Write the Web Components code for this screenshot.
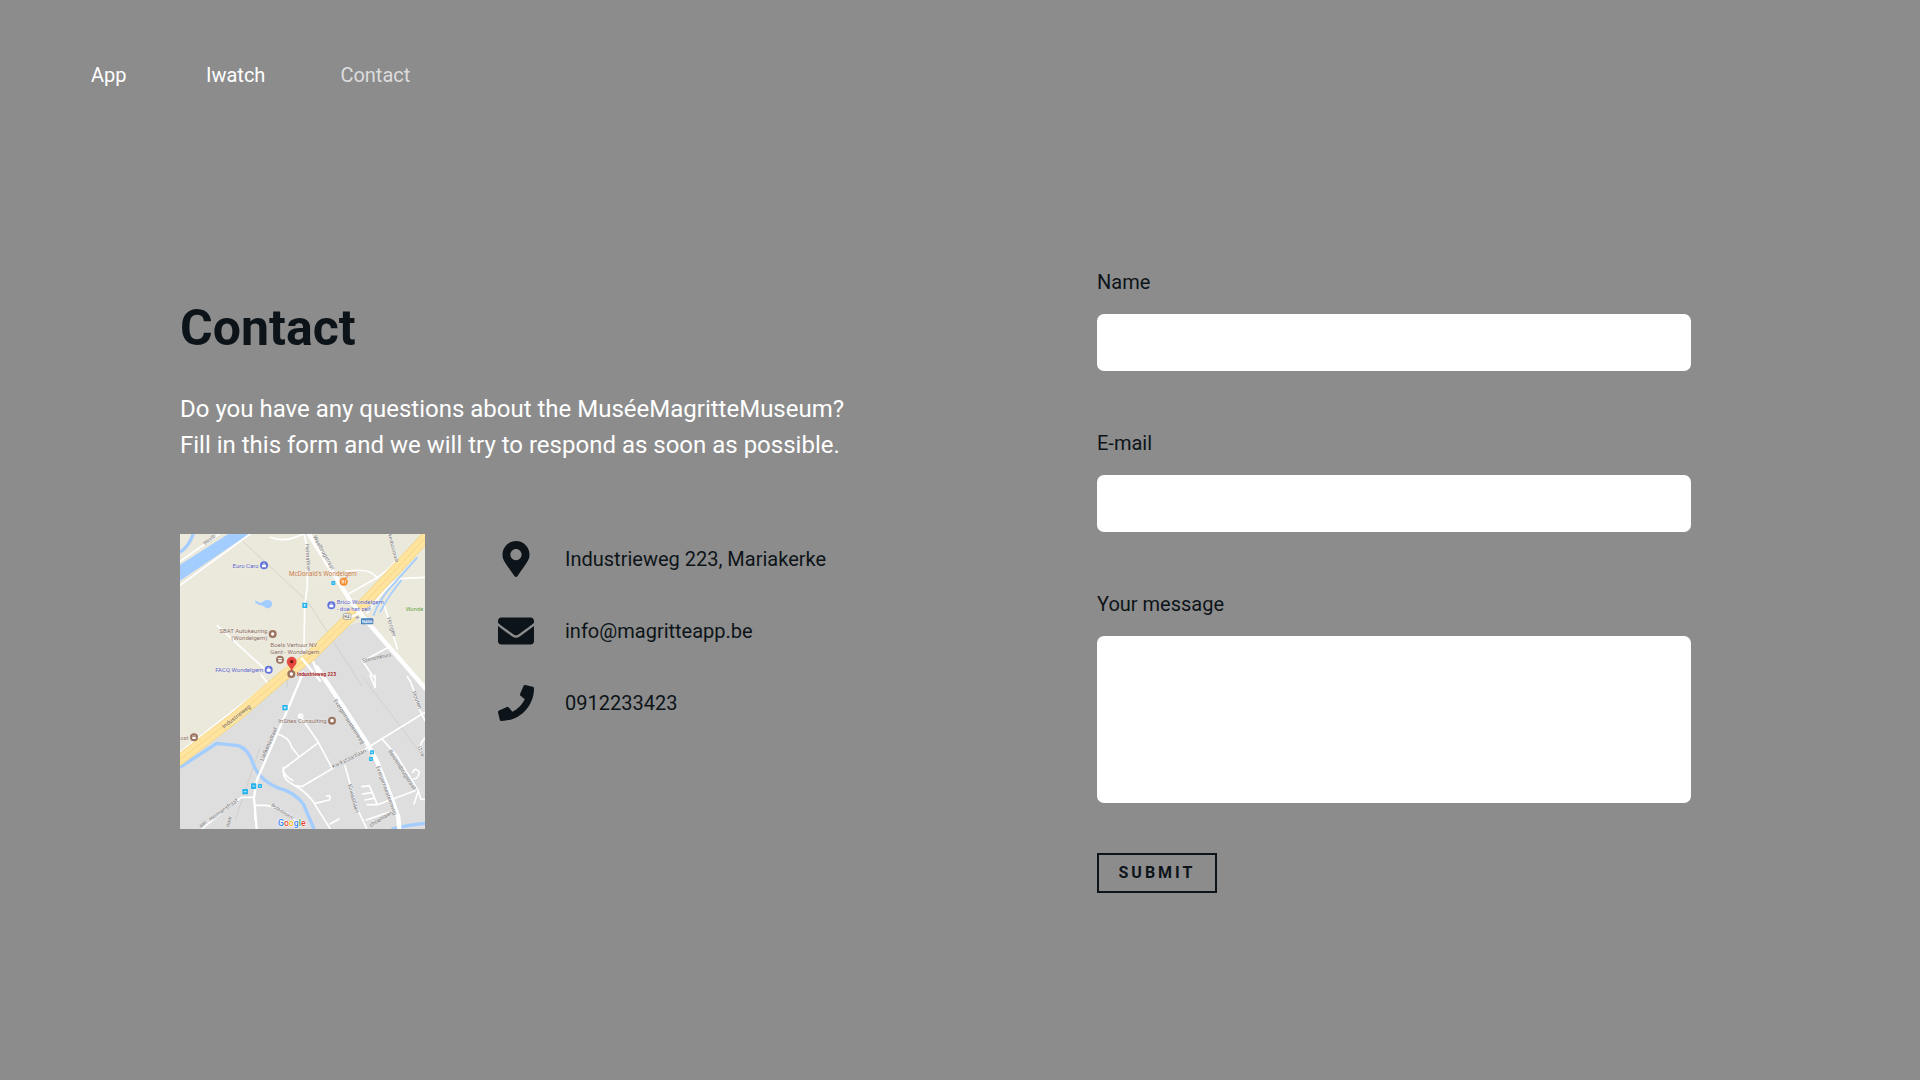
<!DOCTYPE html>
<html lang="en">
<head>
<meta charset="utf-8">
<meta name="viewport" content="width=device-width, initial-scale=1">
<title>Contact</title>
<style>
  body {
    margin: 0;
    min-height: 100vh;
    background: #8c8c8c;
    color: #0d1419;
    font-family: Roboto, "Liberation Sans", sans-serif;
    font-size: 20px;
    line-height: 24px;
  }
</style>
</head>
<body>
<contact-page></contact-page>

<template id="map-template">
<style>
  :host { display: block; width: 245px; flex: none; }
  svg { display: block; width: 100%; height: auto; font-family: Roboto, "Liberation Sans", sans-serif; font-size: 18px; }
  .road { fill: none; stroke: #fff; stroke-width: 5; stroke-linecap: round; stroke-linejoin: round; }
  .main { stroke-width: 13; }
  .mid { stroke-width: 7; }
  .water { fill: none; stroke: #a3ccff; stroke-width: 10; stroke-linejoin: round; }
  .rail { fill: none; stroke: #cbc9c3; stroke-width: 2; }
  .blue { fill: #5c66c9; }
  .brown { fill: #8d6e63; }
  .street { fill: #77777a; font-size: 17px; }
  text { paint-order: stroke; stroke: #fff; stroke-opacity: .3; stroke-width: 3; }
  .logo { font-size: 26px; font-weight: 500; stroke-opacity: .9; }
</style>
<svg viewBox="0 0 735 885" role="img" aria-label="Map of Industrieweg 223">
  <rect width="735" height="885" fill="#ebe8dc"/>
  <path d="M0 690 310 425 470 285 550 262 700 423 735 470V885H0Z" fill="#dedede"/>
  <path class="rail" d="M165 0 385 205 545 455M545 425 735 675M322 460V400M240 640 165 860"/>
  <path d="M145 0H207L0 140V92Z" fill="#a3ccff"/>
  <path class="water" stroke-width="7" d="M0 55Q25 40 40 0"/>
  <path d="M226 199Q240 210 248 204Q256 194 272 200Q282 210 270 221Q260 226 250 216Q238 214 226 206Z" fill="#a3ccff"/>
  <path class="water" d="M0 700 110 628 175 635Q205 645 220 690T290 760Q345 775 370 810L402 885M635 885Q690 872 735 868"/>
  <path class="road" d="M0 82 118 0M0 154 210 0M272 10Q310 25 350 8L372 0M372 0Q382 20 382 160L374 214 372 350 362 388M498 112Q570 100 592 132M505 180 590 132Q645 95 650 70L625 0M562 238Q620 150 660 134L735 130M612 210 652 345M548 382 580 428M112 275 265 415M548 382 625 340M585 423V460"/>
  <path class="water" style="stroke-width:5" d="M580 245Q600 190 650 140L712 70M600 235Q625 185 665 138"/>
  <path class="road main" d="M387 0 512 202 550 250 735 462"/>
  <path class="road mid" d="M370 415 330 510 230 740 222 790 230 885M396 374 412 414"/>
  <path class="road" d="M0 655 320 405M244 423 262 446"/>
  <path d="M747 0 550 210 390 368 310 426 170 546-10 684" fill="none" stroke="#f3d785" stroke-width="33"/>
  <path d="M747 0 550 210 390 368 310 426 170 546-10 684" fill="none" stroke="#ffe4a0" stroke-width="28"/>
  <path d="M747 0 550 210 390 368 310 426 170 546-10 684" fill="none" stroke="#f1cf74" stroke-width="2"/>
  <path class="road main" d="M520 212 560 262M410 400 490 518 560 625 590 680 630 780 655 850 658 885"/>
  <path class="road mid" d="M365 373 420 440M510 250 545 235"/>
  <path class="road" d="M360 545 412 620 455 700M412 628 310 705Q305 735 345 755L365 758 560 643 735 535M288 600Q325 605 335 640L355 665M310 700Q305 718 338 740M345 755Q390 780 410 820L450 883M495 695 530 820 560 883M605 613 650 665 715 770 702 810M715 770 722 795 735 797M698 715Q705 698 718 714 715 735 700 735M545 758 568 755 592 812 705 770M548 780 575 776M555 798 580 793M562 812 592 812M558 858 640 830M225 858V814H258Q310 820 345 858M222 790H185L145 820 65 885M405 808 448 798Q455 780 440 786M450 870 477 855M570 423 585 460M682 428Q700 450 710 510L735 560M735 612Q715 630 723 655"/>
  <circle class="road" cx="362" cy="546" r="6"/>

  <g class="street">
    <text transform="translate(74 34) rotate(-38)" font-size="15">Westb</text>
    <text transform="translate(376 30) rotate(87)">Heirnakker</text>
    <text transform="translate(398 8) rotate(61)">Waalbrugstraat</text>
    <text transform="translate(624 2) rotate(75)" font-size="15">kenbosstraat</text>
    <text transform="translate(620 252) rotate(72)">Hoogen</text>
    <text transform="translate(548 386) rotate(-13)">Stenenkruis</text>
    <text transform="translate(696 474) rotate(70)">Houten</text>
    <text transform="translate(460 500) rotate(57)">Evergemsesteenweg</text>
    <text transform="translate(588 698) rotate(70)">Evergemsesteenweg</text>
    <text transform="translate(250 682) rotate(-67)">Liefkensstraat</text>
    <text transform="translate(460 704) rotate(-27)">Kwikstaartlaan</text>
    <text transform="translate(503 752) rotate(74)">Kineastlaan</text>
    <text transform="translate(624 652) rotate(57)">Benninsbrugstraat</text>
    <text transform="translate(713 640) rotate(66)" font-size="15">Utva</text>
    <text transform="translate(92 862) rotate(-36)">Heimanstraat</text>
    <text transform="translate(62 882) rotate(-40)">aat</text>
    <text transform="translate(147 880) rotate(-75)">ouw</text>
    <text transform="translate(272 816) rotate(32)" font-size="15">Boterbloem</text>
    <text transform="translate(572 880) rotate(-32)">choenlaan</text>
  </g>
  <text transform="translate(132 584) rotate(-38)" fill="#77613a">Industrieweg</text>

  <text class="blue" x="236" y="101" text-anchor="end">Euro Caro</text>
  <text fill="#c57c45" x="327" y="125" font-size="19">McDonald's Wondelgem</text>
  <text class="blue" x="470" y="211">Brico Wondelgem</text>
  <text class="blue" x="470" y="231">- doe het zelf</text>
  <text fill="#689f38" x="677" y="232" font-size="17">Wonde</text>
  <text class="brown" x="262" y="297" text-anchor="end">SBAT Autokeuring</text>
  <text class="brown" x="262" y="317" text-anchor="end">(Wondelgem)</text>
  <text class="brown" x="271" y="338">Boels Verhuur NV</text>
  <text class="brown" x="271" y="359">Gent - Wondelgem</text>
  <text class="blue" x="250" y="414" text-anchor="end">FACQ Wondelgem</text>
  <text class="brown" x="440" y="567" text-anchor="end">InSites Consulting</text>
  <text class="brown" x="1" y="617" font-size="17">ost</text>
  <text x="351" y="426" fill="#a51f26" font-weight="700" font-size="15">Industrieweg 223</text>

  <g fill="#6473dc"><circle cx="252" cy="94" r="12"/><circle cx="454" cy="214" r="12"/><circle cx="266" cy="407" r="12"/></g>
  <g fill="#fff">
    <path id="bag" d="M246 92h12v8h-12zM248 91q4-7 8 0z"/>
    <use href="#bag" x="202" y="120"/><use href="#bag" x="14" y="313"/>
  </g>
  <circle cx="491" cy="143" r="12" fill="#f58b2c"/>
  <path d="M486 137v12M490 137v12M486 142h5M496 137v12" stroke="#fff" stroke-width="2"/>
  <g fill="#9c7360"><circle cx="278" cy="300" r="12"/><circle cx="300" cy="377" r="12"/><circle cx="456" cy="560" r="12"/><circle cx="42" cy="610" r="12"/><circle cx="334" cy="420" r="12"/></g>
  <g fill="#fff"><circle cx="278" cy="300" r="5"/><path d="M294 372h12v3h-12zM295 377h10v6h-10z"/><rect x="451" y="555" width="10" height="10" rx="3"/><path d="M36 605h12v2H36zM37 609h10v6H37z"/><circle cx="334" cy="420" r="5"/></g>
  <path d="M335 414C333 396 321 396 321 383a14 14 0 0 1 28 0c0 13-12 13-14 31Z" fill="#e9483e" stroke="#bb3229"/>
  <circle cx="335" cy="383" r="5" fill="#711713"/>

  <g fill="#26b4ef"><rect x="454" y="141" width="12" height="12" rx="2"/><rect x="367" y="206" width="15" height="16" rx="2"/><rect x="307" y="513" width="16" height="16" rx="2"/><rect x="570" y="649" width="12" height="12" rx="2"/><rect x="567" y="669" width="12" height="12" rx="2"/><rect x="187" y="765" width="17" height="16" rx="2"/><rect x="213" y="748" width="16" height="17" rx="2"/><rect x="234" y="750" width="12" height="12" rx="2"/></g>
  <path d="M457 147h6M371 213h7M374 210v8M311 521h8M315 517v8M573 655h6M570 675h6M191 773h9M217 756h8M237 756h6" stroke="#fff" stroke-width="2"/>
  <rect x="490" y="239" width="23" height="17" rx="3" fill="#f4f3ef" stroke="#8b8b88" stroke-width="2"/>
  <text x="493" y="253" font-size="13" fill="#555">R4</text>
  <rect x="543" y="253" width="37" height="18" rx="3" fill="#3b79bd"/>
  <text x="546" y="267" font-size="13" fill="#fff" stroke="none">N456</text>
  <path d="M526 250h12M532 245v10" stroke="#7a86c9" stroke-width="2"/>
  <text class="logo" x="294" y="877"><tspan fill="#4285f4">G</tspan><tspan fill="#ea4335">o</tspan><tspan fill="#fbbc05">o</tspan><tspan fill="#4285f4">g</tspan><tspan fill="#34a853">l</tspan><tspan fill="#ea4335">e</tspan></text>
</svg>
</template>

<script>
const icons = {
  pin: ['0 0 384 512', 'M172.268 501.67C26.97 291.031 0 269.413 0 192 0 85.961 85.961 0 192 0s192 85.961 192 192c0 77.413-26.97 99.031-172.268 309.67-9.535 13.774-29.93 13.773-39.464 0zM192 272c44.183 0 80-35.817 80-80s-35.817-80-80-80-80 35.817-80 80 35.817 80 80 80z'],
  mail: ['0 0 512 512', 'M502.3 190.8c3.9-3.1 9.7-.2 9.7 4.7V400c0 26.5-21.5 48-48 48H48c-26.5 0-48-21.5-48-48V195.6c0-5 5.7-7.8 9.7-4.7 22.4 17.4 52.1 39.5 154.1 113.6 21.1 15.4 56.7 47.8 92.2 47.6 35.7.3 72-32.8 92.3-47.6 102-74.1 131.6-96.3 154-113.7zM256 320c23.2.4 56.6-29.2 73.4-41.4 132.7-96.3 142.8-104.7 173.4-128.7 5.8-4.5 9.2-11.5 9.2-18.9v-19c0-26.5-21.5-48-48-48H48c-26.5 0-48 21.5-48 48v19c0 7.4 3.4 14.3 9.2 18.9 30.6 23.9 40.7 32.4 173.4 128.7 16.8 12.2 50.2 41.8 73.4 41.4z'],
  phone: ['0 0 512 512', 'M493.4 24.6l-104-24c-11.3-2.6-22.9 3.3-27.5 13.9l-48 112c-4.2 9.8-1.4 21.3 6.9 28l60.6 49.6c-36 76.7-98.9 140.5-177.2 177.2l-49.6-60.6c-6.8-8.3-18.2-11.1-28-6.9l-112 48C3.9 366.5-2 378.1.6 389.4l24 104C27.1 504.2 36.7 512 48 512c256.1 0 464-207.5 464-464 0-11.2-7.7-20.9-18.6-23.4z']
};

class BaseElement extends HTMLElement {
  constructor() {
    super();
    this.attachShadow({ mode: 'open' });
  }
  connectedCallback() {
    if (!this.shadowRoot.firstChild) this.shadowRoot.innerHTML = this.render();
  }
}

customElements.define('site-nav', class extends BaseElement {
  render() {
    return `<style>
      :host { display: block; padding: 63px 91px 0; }
      nav { display: flex; flex-wrap: wrap; gap: 24px 75px; }
      a { min-width: 40px; color: #fff; text-decoration: none; }
      a[aria-current] { color: #dcdcdc; }
    </style>
    <nav aria-label="Main"><a href="#app">App</a><a href="#iwatch">Iwatch</a><a href="#contact" aria-current="page">Contact</a></nav>`;
  }
});

customElements.define('location-map', class extends BaseElement {
  connectedCallback() {
    if (!this.shadowRoot.firstChild)
      this.shadowRoot.append(document.getElementById('map-template').content.cloneNode(true));
  }
});

customElements.define('contact-detail', class extends BaseElement {
  render() {
    const [box, path] = icons[this.getAttribute('icon')];
    return `<style>
      :host { display: flex; align-items: center; gap: 31px; height: 36px; }
      svg { width: 36px; height: 36px; flex: none; fill: currentColor; }
    </style>
    <svg viewBox="${box}" aria-hidden="true"><path d="${path}"/></svg><span><slot></slot></span>`;
  }
});

customElements.define('contact-intro', class extends BaseElement {
  render() {
    return `<style>
      :host { display: block; padding-top: 28px; }
      h1 { margin: 0 0 33px; font-size: 50px; line-height: 60px; font-weight: 700; }
      p { margin: 0 0 71px; font-size: 24px; line-height: 36px; color: #fff; }
      .where { display: flex; gap: 73px; }
      .details { display: flex; flex-direction: column; gap: 36px; padding-top: 7px; }
    </style>
    <h1>Contact</h1>
    <p>Do you have any questions about the MuséeMagritteMuseum?<br>Fill in this form and we will try to respond as soon as possible.</p>
    <div class="where">
      <location-map></location-map>
      <div class="details">
        <contact-detail icon="pin">Industrieweg 223, Mariakerke</contact-detail>
        <contact-detail icon="mail">info@magritteapp.be</contact-detail>
        <contact-detail icon="phone">0912233423</contact-detail>
      </div>
    </div>`;
  }
});

customElements.define('form-field', class extends BaseElement {
  render() {
    const type = this.getAttribute('type');
    const control = type === 'textarea'
      ? '<textarea id="control"></textarea>'
      : `<input id="control" type="${type}">`;
    return `<style>
      :host { display: flex; flex-direction: column; gap: 20px; }
      input, textarea { display: block; box-sizing: border-box; width: 100%; height: 57px; margin: 0; padding: 12px 16px; border: 0; border-radius: 7px; background: #fff; color: inherit; font: inherit; }
      textarea { height: 167px; resize: none; }
    </style>
    <label for="control">${this.getAttribute('label')}</label>${control}`;
  }
});

customElements.define('contact-form', class extends BaseElement {
  render() {
    return `<style>
      :host { display: block; }
      form { display: flex; flex-direction: column; gap: 60px; }
      button { display: block; width: 120px; height: 40px; margin: -10px 0 0; padding: 0; border: 2px solid; background: none; color: inherit; font: 700 16px/24px Roboto, "Liberation Sans", sans-serif; letter-spacing: 3px; text-transform: uppercase; }
    </style>
    <form>
      <form-field label="Name" type="text"></form-field>
      <form-field label="E-mail" type="email"></form-field>
      <form-field label="Your message" type="textarea"></form-field>
      <button type="submit">Submit</button>
    </form>`;
  }
});

customElements.define('contact-page', class extends BaseElement {
  render() {
    return `<style>
      :host { display: block; }
      main { display: grid; grid-template-columns: 917fr 594fr; padding: 183px 229px 80px 180px; }
      @media (max-width: 1300px) { main { grid-template-columns: 1fr; gap: 60px; padding: 80px 91px; } }
    </style>
    <site-nav></site-nav>
    <main><contact-intro></contact-intro><contact-form></contact-form></main>`;
  }
});
</script>
</body>
</html>
